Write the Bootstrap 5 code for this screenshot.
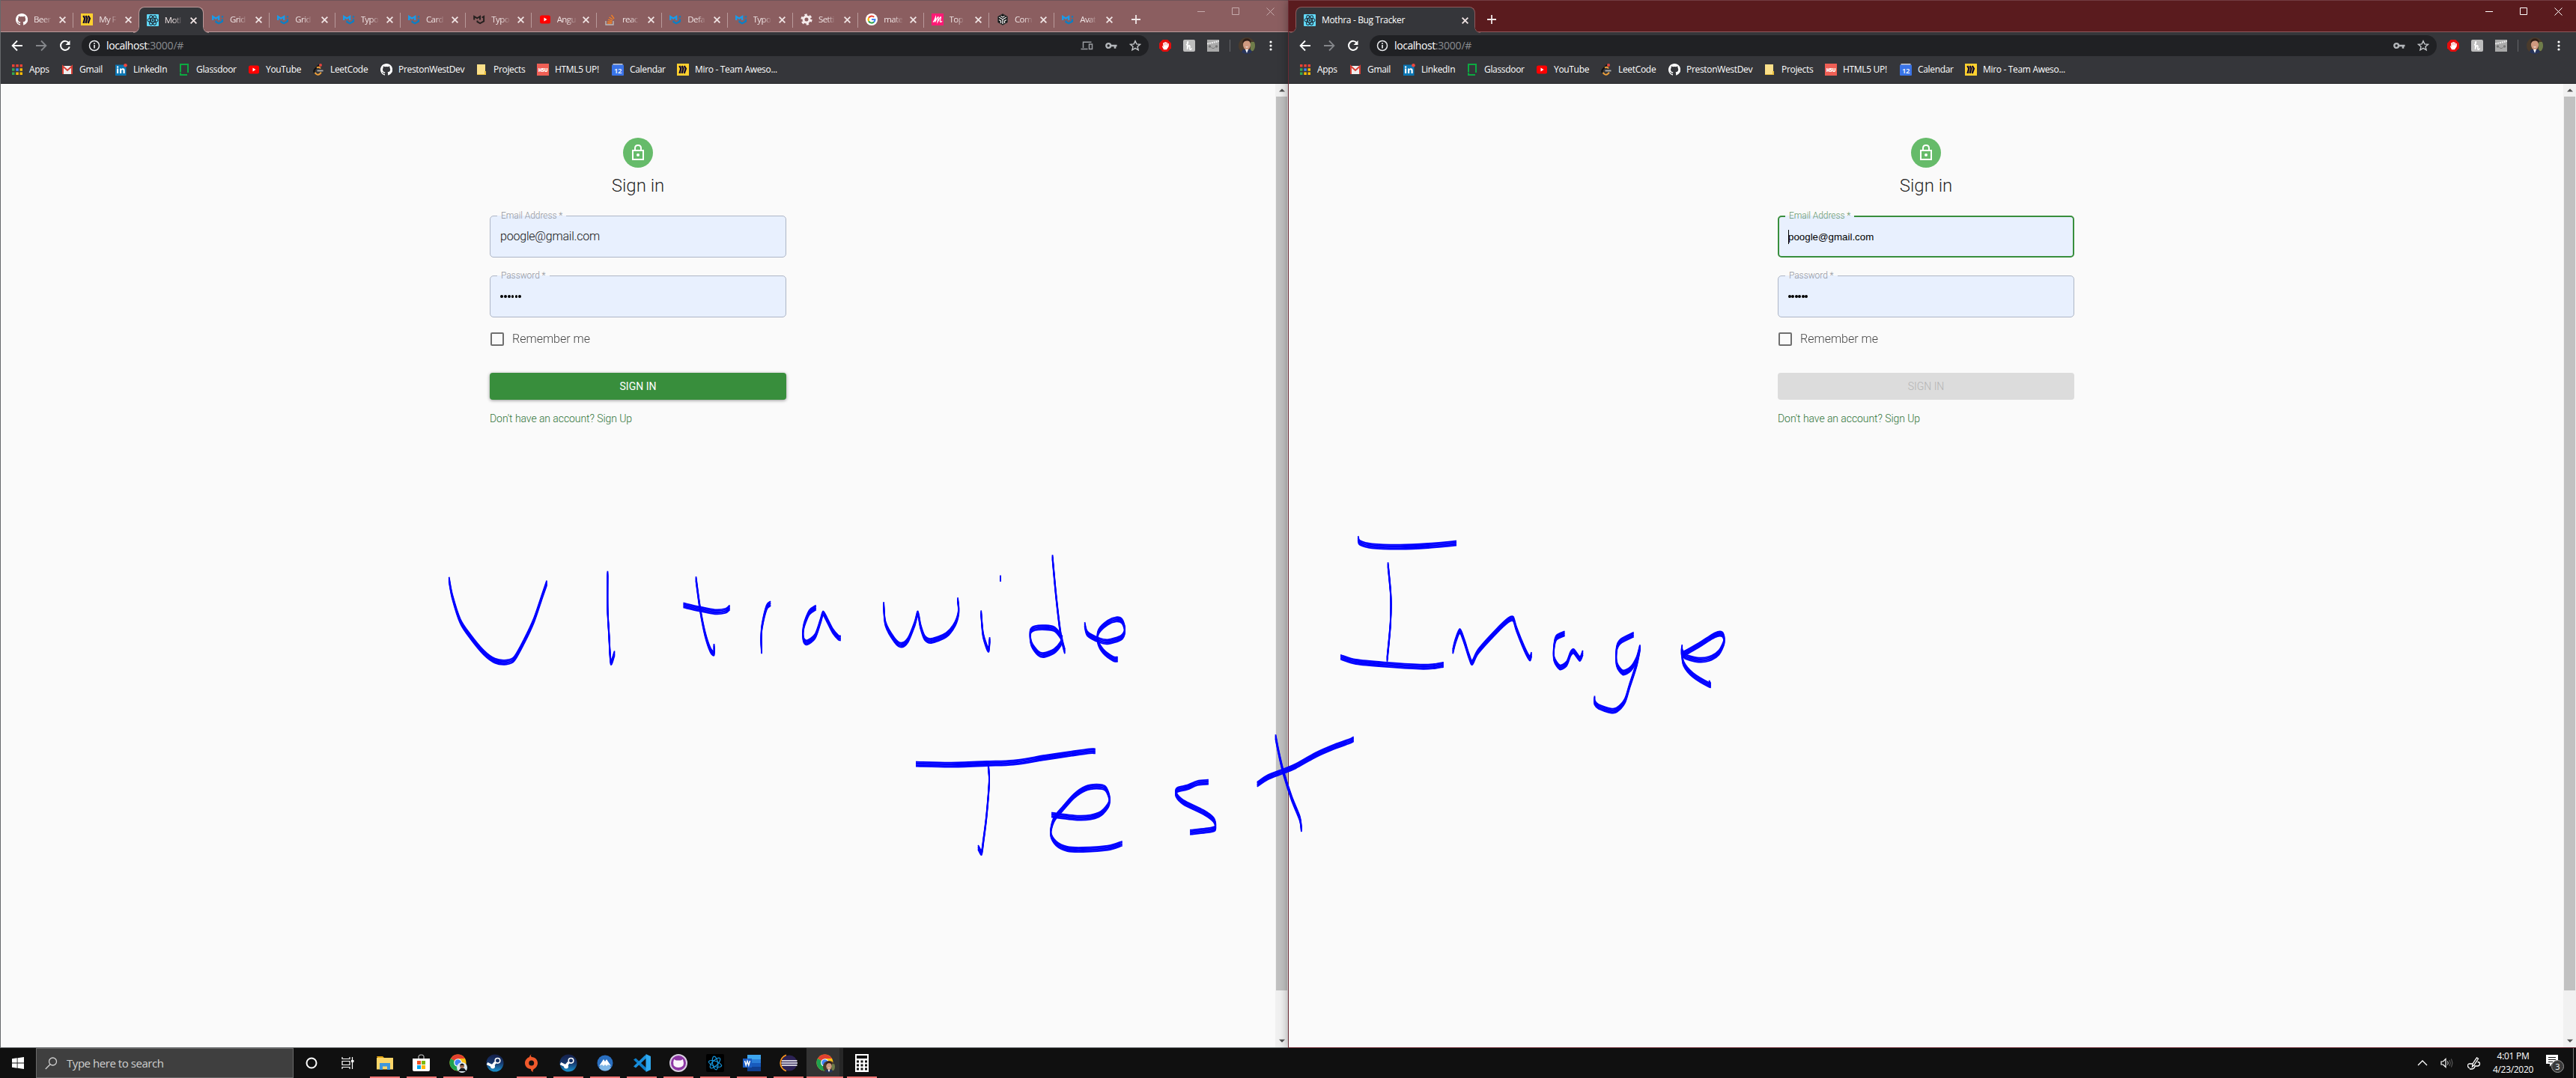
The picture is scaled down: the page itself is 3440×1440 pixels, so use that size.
<!DOCTYPE html>
<html lang="en">
<head>
<meta charset="utf-8">
<title>Mothra - Bug Tracker</title>
<link href="https://cdn.jsdelivr.net/npm/bootstrap@5.3.0/dist/css/bootstrap.min.css" rel="stylesheet">
<style>
body{width:3440px;height:1440px;overflow:hidden;font-family:"Open Sans","Noto Sans",sans-serif;font-size:12px;line-height:16px;background:#111}
svg{display:block;flex:none}
.win{width:1720px;height:1400px;border-left:1px solid #66696b;border-bottom:1px solid #66696b;background:#35363a}
.win-b{border-color:#6b2a35;position:relative;box-shadow:0 0 12px rgba(0,0,0,.35)}
.strip{height:43px;background:#8b5e60;border-top:1px solid #6f5458;border-bottom:1px solid #bb9a9a;padding-left:9px}
.win-b .strip{background:#5a1b1e;border-top-color:#723c42;border-bottom-color:#8e5a5c}
.tab{width:87.33px;height:34px;margin-top:8px;padding:0 8px 0 11px;color:#efe3e3;position:relative}
.tab+.tab:not(.on)::before{content:"";position:absolute;left:0;top:8px;height:20px;width:1px;background:#b99a9b}
.tab.on+.tab::before{display:none}
.tab span{margin-left:8px;white-space:nowrap;font-size:11.5px;letter-spacing:-.6px;-webkit-mask-image:linear-gradient(90deg,#000 55%,rgba(0,0,0,.15))}
.tab.on{background:#35363a;border:1px solid #bb9a9a;border-bottom:0;border-radius:8px 8px 0 0;height:35px;padding-left:10px;padding-right:7px}
.tab.on::before,.tab.on::after{content:"";position:absolute;bottom:0;width:8px;height:8px}
.tab.on::before{left:-8px;background:radial-gradient(circle at 0 0,transparent 7px,#bb9a9a 7.3px,#35363a 8.3px)}
.tab.on::after{right:-8px;background:radial-gradient(circle at 100% 0,transparent 7px,#bb9a9a 7.3px,#35363a 8.3px)}
.win-b .tab.on{width:240px;border-color:#8e5a5c}
.win-b .tab.on span{-webkit-mask-image:none;font-size:12px;letter-spacing:-.35px;color:#fff}
.win-b .tab.on::before{background:radial-gradient(circle at 0 0,transparent 7px,#8e5a5c 7.3px,#35363a 8.3px)}
.win-b .tab.on::after{background:radial-gradient(circle at 100% 0,transparent 7px,#8e5a5c 7.3px,#35363a 8.3px)}
.plus{margin:8px 0 0 15px;height:34px}
.ctls{margin-right:1px}
.ctl{width:46px;height:28px;color:#c6abac}
.win-b .ctl{color:#fff}
.tools{height:36px;padding:0 12px 0 13.5px}
.navi{width:32.3px}
.omni{height:28px;border-radius:14px;background:#202124;margin-left:3px;width:1424.5px;padding:0 10px 0 9px;color:#fff;font-size:14px}
.omni b{font-weight:400;margin-left:8px;letter-spacing:-.45px}
.omni i{font-style:normal;color:#8a8d91;letter-spacing:-.2px}
.ext{width:32.2px}
.marks{height:33px;border-bottom:1px solid #232427;padding-left:14px;color:#fff}
.mk{flex:none;height:28px;gap:8px;white-space:nowrap;letter-spacing:-.32px}
.page{background:#fafafa;color:rgba(0,0,0,.87);font-family:Roboto,sans-serif;font-weight:300;min-height:0}
.form{width:396px;padding-top:72px;margin:0 auto;font-size:16px}
.lock{width:40px;height:40px;background:#66bb6a;border-radius:50%}
.ttl{font-size:24px;line-height:32px;font-weight:300;margin:8px 0 24px}
.fld{height:56px;border:1px solid #aeb6c6;border-radius:5px;background:#e8f0fe;margin-bottom:24px;padding:0 13px;position:relative;line-height:56px;color:#111;letter-spacing:-.2px}
.fld label{position:absolute;left:9px;top:-9px;height:16px;padding:0 5px;line-height:16px;font-size:12px;letter-spacing:-.07px;color:#8f939b;background:linear-gradient(#fafafa 8px,#e8f0fe 8px)}
.fld.hot{border:2px solid #388e3c;padding:0 12px}
.fld.hot label{color:#5f9468;top:-10px;left:8px}
.sys{font-family:"Liberation Sans",Arial,sans-serif;font-size:13.33px;font-weight:400;color:#000;letter-spacing:0;padding-top:1px;margin-left:-1px}
.caret{width:1px;height:19px;background:#000}
.dots i{width:3.8px;height:3.8px;border-radius:50%;background:#000;display:block}
.chk{width:18px;height:18px;border:2px solid #6f6f6f;border-radius:2px;margin-left:1px}
.remember{height:18px;margin-top:-4px}
.remember span+span{margin-left:11px;opacity:.85}
.go{height:36px;border-radius:4px;background:#388e3c;color:#fff;font-size:14px;line-height:36px;text-align:center;box-shadow:0 1px 4px rgba(0,0,0,.4);font-weight:400;margin-top:36px}
.go.off{background:#dcdcdc;color:#b3b3b3;box-shadow:none;font-weight:300}
.lnk{font-size:14px;line-height:20px;letter-spacing:-.07px;color:#2f7338;margin-top:15px}
.sbar{width:17px;background:#f1f1f1}
.thumb{width:15px;height:1194px;background:#c1c1c1;margin:0 auto}
.ink{position:absolute;left:0;top:0;z-index:5;pointer-events:none}
.task{height:40px;background:#101010;color:#fff;position:relative;z-index:2}
.find{width:344px;height:40px;background:#3f3f3f;border:1px solid #6a6a6a;padding-left:11px;color:#d0d0d0;font-size:15px;letter-spacing:-.45px;gap:12px}
.tk{height:40px;width:49px;position:relative}
.tk-first{margin-left:-2px}
.run::after{content:"";position:absolute;left:4.5px;right:4.5px;bottom:0;height:2px;background:#fd7676}
.now{background:linear-gradient(90deg,#333 44px,#272727 44px)}
.now::after{left:0;right:0}
.clock{font-size:12px;line-height:18px;text-align:center;width:64px;letter-spacing:-.3px}
</style>
<script src="https://cdn.jsdelivr.net/npm/bootstrap@5.3.0/dist/js/bootstrap.bundle.min.js"></script>
</head>
<body>
<svg width="0" height="0" class="position-absolute">
<defs>
<symbol id="gh" viewBox="0 0 16 16"><path fill="#fff" d="M8 0C3.6 0 0 3.6 0 8c0 3.5 2.3 6.5 5.5 7.6.4.1.5-.2.5-.4v-1.4c-2.2.5-2.7-1-2.7-1-.4-.9-.9-1.2-.9-1.2-.7-.5.1-.5.1-.5.8.1 1.2.8 1.2.8.7 1.3 1.9.9 2.3.7.1-.5.3-.9.5-1.1C4.800 11.300 3 10.700 3 7.600c0-.9.3-1.600.8-2.100-.1-.2-.4-1 .1-2.100 0 0 .7-.2 2.200.8a7.500 7.500 0 0 1 4 0c1.500-1 2.200-.8 2.200-.8.4 1.100.2 1.900.1 2.100.5.600.8 1.300.8 2.100 0 3.100-1.900 3.700-3.700 3.900.3.300.600.800.600 1.500v2.200c0 .2.100.5.600.4A8 8 0 0 0 8 0z"/></symbol>
<symbol id="miro" viewBox="0 0 16 16"><path fill="#ffd02f" d="M0 0h16v16H0z"/><path d="M3.300 3l2 3.600L3.500 13M6.500 3l2 3.600L6.500 13M9.700 3l2.200 3.600L9.600 13" fill="none" stroke="#0c0730" stroke-width="2.300"/></symbol>
<symbol id="react" viewBox="0 0 16 16"><rect width="16" height="16" rx="1" fill="#61dafb"/><g fill="none" stroke="#20323d" stroke-width="1.100"><ellipse cx="8" cy="8" rx="7" ry="2.800"/><ellipse cx="8" cy="8" rx="7" ry="2.800" transform="rotate(60 8 8)"/><ellipse cx="8" cy="8" rx="7" ry="2.800" transform="rotate(120 8 8)"/></g><circle cx="8" cy="8" r="1.400" fill="#20323d"/></symbol>
<symbol id="mui" viewBox="0 0 16 16"><g fill="none" stroke-width="2.300"><path d="M1.200 9V4l4 2.600L9.200 4v5" stroke="#1a9bea"/><path d="M5.500 9.500v1.800l3.600 2 4.800-2.700V7.500" stroke="#0b7fc4"/><path d="M14 3.300v2.200" stroke="#0b7fc4"/></g></symbol>
<symbol id="muik" viewBox="0 0 16 16"><g fill="none" stroke="#26201f" stroke-width="2"><path d="M1.200 8.500V4l4 2.400L9 4v4.500"/><path d="M5.500 9.500v1.600l3.600 2 5-2.700V4l-2.500 1.500"/></g></symbol>
<symbol id="yt" viewBox="0 0 16 16"><rect x="1" y="2.500" width="14" height="11" rx="2.500" fill="#f00"/><path d="M6.500 5.500v5L10.500 8z" fill="#fff"/></symbol>
<symbol id="so" viewBox="0 0 16 16"><path d="M2 10v5h10v-5" fill="none" stroke="#bcbbbb" stroke-width="1.400"/><path d="M4 13h6M4.200 10.700l6 .7M5 8l5.600 1.800M6.500 5l5 3.300M9.500 2l3.600 5" stroke="#f48024" stroke-width="1.300"/></symbol>
<symbol id="gear" viewBox="0 0 16 16"><g fill="none" stroke="#f5ecec"><circle cx="8" cy="8" r="4" stroke-width="3"/><circle cx="8" cy="8" r="6.300" stroke-width="2.600" stroke-dasharray="3.300 3.300"/></g></symbol>
<symbol id="goog" viewBox="0 0 16 16"><circle cx="8" cy="8" r="8" fill="#fff"/><g fill="none" stroke-width="2.200"><path d="M11.200 4.800A4.500 4.500 0 0 0 4.100 5.800" stroke="#ea4335"/><path d="M4.100 5.800a4.500 4.500 0 0 0 0 4.400" stroke="#fbbc05"/><path d="M4.100 10.200a4.500 4.500 0 0 0 7 1.200" stroke="#34a853"/><path d="M11.100 11.400A4.500 4.500 0 0 0 12.400 8H8" stroke="#4285f4"/></g></symbol>
<symbol id="emm" viewBox="0 0 16 16"><path fill="#ff1a75" d="M0 0h16v16H0z"/><path d="M2 11.500C4 10 5 6 5.500 4.500 6 6.500 5 9 4.500 11.500 6 9 7.500 5 9 4.500 9.500 6 8 9 8 11.500 9.500 9 11 5 12.300 4.500c.700 1.500-1.500 4.500-.8 6.500.8.800 2-.2 2.500-1" fill="none" stroke="#fff" stroke-width="1.200"/></symbol>
<symbol id="csb" viewBox="0 0 16 16"><path fill="#151515" stroke="#444" stroke-width=".8" d="M8 .5l6.500 3.700v7.600L8 15.500l-6.500-3.700V4.200z"/><path d="M3 5l5 3 5-3M8 8v6M5.500 3.500L8 5l2.500-1.500M3 8.500l2.500 1.500v3M13 8.500L10.500 10v3" fill="none" stroke="#e8e8e8" stroke-width="1.400"/></symbol>
<symbol id="x" viewBox="0 0 10 10"><path d="M1.500 1.500l7 7M8.500 1.500l-7 7" stroke="currentColor" stroke-width="1.700"/></symbol>
<symbol id="plus" viewBox="0 0 14 14"><path d="M7 1v12M1 7h12" stroke="#efe6e6" stroke-width="1.800"/></symbol>
<symbol id="back" viewBox="0 0 16 16"><path d="M15 8H2M8 1.500L1.600 8 8 14.500" fill="none" stroke="currentColor" stroke-width="1.800"/></symbol>
<symbol id="rel" viewBox="0 0 16 16"><path d="M13 4.500A6 6 0 1 0 13.800 9.500" fill="none" stroke="#fff" stroke-width="2"/><path d="M14.500 1v6h-6z" fill="#fff"/></symbol>
<symbol id="info" viewBox="0 0 16 16"><circle cx="8" cy="8" r="6.500" fill="none" stroke="#e8eaed" stroke-width="1.500"/><path d="M8 7v4.500M8 4.200v1.700" stroke="#e8eaed" stroke-width="1.700"/></symbol>
<symbol id="cast" viewBox="0 0 16 14"><g fill="none" stroke="#9a9da1" stroke-width="1.500"><path d="M14 2.200H3V10M0 11.500h9"/><path d="M11 5h4v6.500h-4z"/></g></symbol>
<symbol id="key" viewBox="0 0 16 10"><circle cx="4.200" cy="5" r="2.900" fill="none" stroke="#b4b7bb" stroke-width="2.400"/><path d="M7 5h8.500M13 5v3.800" stroke="#b4b7bb" stroke-width="2.600"/></symbol>
<symbol id="star" viewBox="0 0 16 16"><path d="M8 1.700l1.900 4.200 4.600.4-3.500 3 1.100 4.500L8 11.400l-4.100 2.400L5 9.300l-3.500-3 4.600-.4z" fill="none" stroke="#c4c7ca" stroke-width="1.400"/></symbol>
<symbol id="abp" viewBox="0 0 16 16"><path fill="#e40d0d" d="M4.700 0h6.600L16 4.700v6.600L11.300 16H4.700L0 11.300V4.700z"/><path d="M4.500 8.500l2 4h3L12 8.500V5M6 8V4M8 8V3M10 8V3.500" stroke="#fff" stroke-width="1.600" fill="none"/><path d="M5.500 7.500h5.800v3L9.500 13h-3z" fill="#fff"/></symbol>
<symbol id="honey" viewBox="0 0 16 16"><rect width="16" height="16" rx="2" fill="#bdbdbd"/><path d="M4 7c2-.5 3-4 2.200-4.300C5 2.700 6 7 5.500 13 6 9 7.500 7.500 8.600 8c1.200.5-.6 4 .4 5 1 .5 2-.5 2.500-1.500" fill="none" stroke="#fff" stroke-width="1.600"/></symbol>
<symbol id="smile" viewBox="0 0 16 16"><path fill="#aaa" d="M0 0h16v16H0z"/><path d="M0 5.500L16 2" stroke="#eee" stroke-width="2" stroke-dasharray="2 1"/><g fill="#777"><circle cx="3.500" cy="9" r="1.700"/><circle cx="12.500" cy="9" r="1.700"/></g><path d="M5.500 10.500q2.500 2.500 5 0" fill="none" stroke="#777"/></symbol>
<symbol id="face" viewBox="0 0 22 22"><clipPath id="fc"><circle cx="11" cy="11" r="11"/></clipPath><g clip-path="url(#fc)"><path fill="#4a3b2c" d="M0 0h22v22H0z"/><path fill="#6f7d4a" d="M16 6h6v12h-6z"/><path fill="#27345a" d="M2 22l4-6h10l4 6z"/><ellipse cx="11" cy="10" rx="5" ry="6.500" fill="#cf9a80"/><path fill="#2f1e17" d="M5.500 8C5 3 8 1.500 11 1.500S17 3 16.500 8C15 4.500 13 4.500 11 4.500S7 5 5.500 8z"/><path fill="#fff" d="M9 16l2 5 2-5zM9 12.500q2 2 4 0z"/></g></symbol>
<symbol id="apps" viewBox="0 0 16 16"><path fill="#ea4335" d="M1 1h3.500v3.500H1zM6.300 1h3.500v3.500H6.300zM11.500 1H15v3.500h-3.500z"/><path fill="#34a853" d="M1 6.300h3.500v3.500H1zM1 11.500h3.500V15H1z"/><path fill="#4285f4" d="M6.300 6.300h3.500v3.500H6.300z"/><path fill="#fbbc05" d="M11.500 6.300H15v3.500h-3.500zM6.300 11.500h3.500V15H6.300zM11.500 11.500H15V15h-3.500z"/></symbol>
<symbol id="gmail" viewBox="0 0 16 16"><path fill="#eee" d="M1 3h14v11H1z"/><path d="M2 14V3.500l6 5.500 6-5.500V14" fill="none" stroke="#d93f35" stroke-width="2"/></symbol>
<symbol id="li" viewBox="0 0 16 16"><path fill="#0a77b5" d="M0 1.500h14.500V16H0z"/><path fill="#fff" d="M2 6.500h2.200V13H2zM2 3.500h2.200v2H2zM6 6.500h2v1c1-1.700 4.700-1.700 4.700 1.500v4h-2.200V9.500c0-1.600-2.300-1.500-2.300 0V13H6z"/><circle cx="13.500" cy="2.300" r="2.300" fill="#f0473e"/></symbol>
<symbol id="gd" viewBox="0 0 16 16"><path fill="none" stroke="#0caa41" stroke-width="2" d="M3 11.500V1h10v11M3 12.500V15h9"/></symbol>
<symbol id="lc" viewBox="0 0 16 16"><path d="M9.500 1.500L3 8q-1.500 2 0 4" fill="none" stroke="#111" stroke-width="2"/><path d="M3.500 12l2 2q2.500 1.500 4.500-.3l2-2M6 5.500q3-2 5 1" fill="none" stroke="#f0a13a" stroke-width="2"/><path d="M6.500 9.500h8" stroke="#b3b3b3" stroke-width="1.800"/><circle cx="11" cy="2" r="2" fill="#e0443e"/></symbol>
<symbol id="fold" viewBox="0 0 16 16"><path fill="#fbe08a" d="M2 1h11v14H2z"/><path fill="#e9bf3f" d="M2 14h10v-4h2v5H2z"/></symbol>
<symbol id="h5" viewBox="0 0 16 16"><path fill="#ef5f55" d="M0 0h16v16H0z"/><text x="8" y="10.500" font-family="Open Sans" font-weight="800" font-size="6.500" fill="#fff" text-anchor="middle">H5U</text></symbol>
<symbol id="cal" viewBox="0 0 16 16"><path fill="#ccc" d="M1.500 0h13v3h-13z"/><rect y="1.500" width="16" height="14.500" rx="1" fill="#3a74e8"/><text x="8" y="13" font-family="Open Sans" font-size="9.500" font-weight="600" fill="#fff" text-anchor="middle">12</text></symbol>
<symbol id="chrome" viewBox="0 0 24 24"><circle cx="12" cy="12" r="11.500" fill="#fbc116"/><path fill="#e2402f" d="M12 12L2 6.300A11.500 11.500 0 0 1 22 6.300H12z"/><path fill="#1fa250" d="M12 12L2 6.300A11.500 11.500 0 0 0 12 23.500l4.500-8z"/><circle cx="12" cy="12" r="5.600" fill="#fff"/><circle cx="12" cy="12" r="4.400" fill="#4285f4"/></symbol>
<linearGradient id="sg" x2="0" y2="1"><stop stop-color="#15204a"/><stop offset=".5" stop-color="#17386d"/><stop offset="1" stop-color="#1993cf"/></linearGradient>
<symbol id="steam" viewBox="0 0 24 24"><circle cx="12" cy="12" r="11.500" fill="url(#sg)"/><circle cx="15.500" cy="8.800" r="3.300" fill="none" stroke="#fff" stroke-width="1.600"/><path d="M1.500 12.500l7 3.500 4-5" stroke="#fff" stroke-width="3.600" fill="none"/><circle cx="9" cy="16.500" r="3" fill="#fff"/></symbol>
<symbol id="tri" viewBox="0 0 10 6"><path d="M0 .5h10L5 5.500z" fill="#505050"/></symbol>
</defs></svg>

<main class="d-flex" id="desk"></main>

<footer class="task d-flex align-items-center">
  <div class="tk d-flex align-items-center justify-content-center" style="width:48px"><svg width="16" height="16"><path fill="#fff" d="M0 2.300L6.700 1.300v6.200H0zM7.500 1.200L16 0v7.500H7.500zM0 8.400h6.700v6.300L0 13.700zM7.500 8.400H16V16l-8.500-1.200z"/></svg></div>
  <div class="find d-flex align-items-center"><svg width="17" height="17"><circle cx="10.500" cy="6" r="5" fill="none" stroke="#d0d0d0" stroke-width="1.300"/><path d="M7 9.700L.8 16" stroke="#d0d0d0" stroke-width="1.300"/></svg>Type here to search</div>
  <div class="tk d-flex align-items-center justify-content-center" style="width:48px"><svg width="16" height="16"><circle cx="8" cy="8" r="6.500" fill="none" stroke="#fff" stroke-width="2"/></svg></div>
  <div class="tk d-flex align-items-center justify-content-center"><svg width="17" height="16" fill="none" stroke="#fff" stroke-width="1.200"><path d="M1 0v2.500h10V0M1 5.500h10v5H1zM1 16v-2.500h10V16M14.500 0v16"/><path d="M13 5.500h3.500" stroke-width="3"/></svg></div>
  <div class="tk ms-0 run d-flex align-items-center justify-content-center" style="margin-left:1.500px"><svg width="22" height="20"><path fill="#e5a50f" d="M0 1h8l2 2h-9z"/><path fill="#fbd669" d="M0 3h22v15.500H0z"/><path fill="#3f97dc" d="M4 19v-9h14v9h-4v-4.500H8V19z"/></svg></div>
  <div class="tk run d-flex align-items-center justify-content-center"><svg width="23" height="24"><path d="M8 6V3q0-2 3.500-2T15 3v3" fill="none" stroke="#ddd"/><path fill="#fff" d="M0 6h23v15q0 2-2 2H2q-2 0-2-2z"/><path fill="#f25022" d="M6 9h5v5H6z"/><path fill="#7fba00" d="M12 9h5v5h-5z"/><path fill="#00a4ef" d="M6 15h5v5H6z"/><path fill="#ffb900" d="M12 15h5v5h-5z"/></svg></div>
  <div class="tk run d-flex align-items-center justify-content-center"><svg width="26" height="26"><use href="#chrome" width="23" height="23" x="1" y="1"/><circle cx="18" cy="19" r="7" fill="#dfeaf0"/><circle cx="18" cy="17" r="3" fill="#9b6b52"/><path fill="#16191f" d="M13 24l3-4h5l3 4zM15 16q3-5 6 0z"/></svg></div>
  <div class="tk d-flex align-items-center justify-content-center"><svg width="24" height="24"><use href="#steam"/></svg></div>
  <div class="tk run d-flex align-items-center justify-content-center"><svg width="20" height="24"><path d="M10 0C8 2 9 3 10 4c5 0 8 4 8 8s-3 7-5 8c-1 1-2 2-1 4-3-1-3-3-3-4-5 0-8-4-8-8s3-7 6-8c0-1 1-3 3-4z" fill="#f0592b"/><circle cx="9.700" cy="12" r="3.500" fill="#111"/></svg></div>
  <div class="tk run d-flex align-items-center justify-content-center"><svg width="24" height="24"><use href="#steam"/></svg></div>
  <div class="tk run d-flex align-items-center justify-content-center"><svg width="22" height="22"><circle cx="11" cy="11" r="10.500" fill="#2a6fc0"/><path d="M3 17L8.500 8l2 3 2-3L19 17q-3 4.500-8 4.500T3 17z" fill="#7fb6e6"/><path d="M3 15l6-9 2 3 2-3 6 9-4-2-2 2-2-2-2 2-2-2z" fill="#fff"/></svg></div>
  <div class="tk run d-flex align-items-center justify-content-center"><svg width="24" height="24"><path d="M1 7.500l3-2L18.500 19v4L16 22z" fill="#0d7fcb"/><path d="M1 16.500l3 2L18.500 5V1L16 2z" fill="#1a8fdc"/><path d="M17.500 0L24 3v18l-6.500 3z" fill="#2ea9f0"/></svg></div>
  <div class="tk run d-flex align-items-center justify-content-center"><svg width="24" height="24"><circle cx="12" cy="12" r="11" fill="#8d36a4" stroke="#d8cfe0" stroke-width="2"/><path fill="#fbf4fb" d="M6 7l3 1.500h6L18 7q1.500 5 .5 8-2 3-6.500 3t-6.500-3Q4.500 11 6 7z"/></svg></div>
  <div class="tk run d-flex align-items-center justify-content-center"><svg width="24" height="24"><rect width="24" height="24" rx="2" fill="#000"/><g fill="none" stroke="#1596dd" stroke-width="1.200"><ellipse cx="12" cy="13" rx="9" ry="3.500" transform="rotate(20 12 13)"/><ellipse cx="12" cy="12" rx="9" ry="3.500" transform="rotate(80 12 12)"/><ellipse cx="12" cy="12" rx="9" ry="3.500" transform="rotate(135 12 12)"/></g></svg></div>
  <div class="tk run d-flex align-items-center justify-content-center"><svg width="24" height="22"><path fill="#3da5ee" d="M6 0h18v6H6z"/><path fill="#2a7dd8" d="M6 6h18v5H6z"/><path fill="#185abd" d="M6 11h18v5H6z"/><path fill="#103f91" d="M6 16h18v6H6z"/><path fill="#1b5ec4" d="M0 5h12v12H0z"/><path d="M2.500 8l1.700 6L6 8.500 7.800 14l1.700-6" fill="none" stroke="#fff" stroke-width="1.500"/></svg></div>
  <div class="tk run d-flex align-items-center justify-content-center"><svg width="24" height="24"><path d="M9 1.500A11 11 0 0 0 9 22.500" fill="none" stroke="#f7941e" stroke-width="2"/><circle cx="13" cy="12" r="10.500" fill="#2c2255"/><path d="M3 9h20.500M2.500 12h21.500M3 15h20.500" stroke="#fff" stroke-width="1.600"/></svg></div>
  <div class="tk run now d-flex align-items-center justify-content-center"><svg width="26" height="26"><use href="#chrome" width="23" height="23" x="1" y="1"/><use href="#face" x="10" y="10" width="16" height="16"/></svg></div>
  <div class="tk run d-flex align-items-center justify-content-center"><svg width="18" height="24"><path fill="#fff" d="M0 0h18v24H0z"/><path fill="#111" d="M2 2h14v4H2z"/><path stroke="#111" stroke-width="3" stroke-dasharray="3 2.500" d="M2 10h14M2 15h14M2 20h14"/></svg></div>
  <div class="ms-auto d-flex align-items-center">
    <svg width="14" height="8"><path d="M1 7l6-6 6 6" fill="none" stroke="#fff" stroke-width="1.300"/></svg>
    <svg width="17" height="14" style="margin-left:17px"><path d="M1 5h2.500L7 1.500v11L3.500 9H1z" fill="none" stroke="#fff" stroke-width="1.200"/><path d="M9.500 4.500q1.500 2.500 0 5" fill="none" stroke="#ddd"/><path d="M12 3q2.500 4 0 8M14.500 1.500q3 5.500 0 11" fill="none" stroke="#666"/></svg>
    <svg width="18" height="17" style="margin-left:19px" fill="none" stroke="#fff" stroke-width="1.300"><path d="M6.500 13L7 9l5.500-8 2 1.300L9 10.500zM6.500 9H3q-2.500 0-2.500 2.500t2.500 3.500M3 16h3q4-1 4-4h4q2.500-.5 2.500-3t-3-2.500"/></svg>
    <div class="clock" style="margin-left:11px">4:01 PM<br>4/23/2020</div>
    <svg width="26" height="26" style="margin-left:11px"><path fill="#fff" d="M1 2h16v12h-8l-3 4v-4H1z"/><path d="M4 5.500h10M4 8.500h10M4 11.500h6" stroke="#111"/><circle cx="16.500" cy="17.500" r="8" fill="#3a3a3a" stroke="#999"/><text x="16.500" y="21.500" fill="#fff" font-size="11" text-anchor="middle">3</text></svg>
    <div style="width:1px;height:40px;background:#7a7a7a;margin:0 3px 0 11px"></div>
  </div>
</footer>

<svg class="ink" width="3440" height="1440"><defs><g id="pen" fill="none" stroke="#00f" stroke-width="1.800" stroke-linecap="square" stroke-linejoin="round"></g></defs>
<use href="#pen" y="-3"/><use href="#pen" y="-1.500"/><use href="#pen"/><use href="#pen" y="1.500"/><use href="#pen" y="3"/></svg>

<script>
const ic=(n,w=16,h=w)=>`<svg width="${w}" height="${h}"><use href="#${n}"/></svg>`;
const tab=(n,t,on)=>`<div class="tab d-flex align-items-center ${on?'on':''}">${ic(n)}<span>${t}</span><div class="ms-auto">${ic('x',11)}</div></div>`;
const marks=[['apps','Apps',67],['gmail','Gmail',72],['li','LinkedIn',84],['gd','Glassdoor',93],['yt','YouTube',86],['lc','LeetCode',91],['gh','PrestonWestDev',127],['fold','Projects',82],['h5','HTML5 UP!',100],['cal','Calendar',87],['miro','Miro - Team Aweso...',150]];
const cell=(c,s)=>`<div class="${c} d-flex justify-content-center align-items-center">${s}</div>`;
function win(tabs,second){
  return `<section class="win d-flex flex-column ${second?'win-b':''}">
  <div class="strip d-flex">${tabs}<div class="plus d-flex align-items-center">${ic('plus',14)}</div>
    <div class="ctls ms-auto d-flex">
      ${cell('ctl','<svg width="10" height="10"><path d="M0 5.500h10" stroke="currentColor"/></svg>')}
      ${cell('ctl','<svg width="10" height="10"><path d="M.5.5h9v9h-9z" fill="none" stroke="currentColor"/></svg>')}
      ${cell('ctl','<svg width="11" height="11"><path d="M.5.5l10 10M10.500.5l-10 10" stroke="currentColor"/></svg>')}</div></div>
  <div class="tools d-flex align-items-center">
    <div class="navi text-white">${ic('back')}</div><div class="navi" style="color:#85878b"><div style="transform:scaleX(-1);width:16px">${ic('back')}</div></div><div class="navi" style="width:27px">${ic('rel')}</div>
    <div class="omni d-flex align-items-center">${ic('info')}<b>localhost</b><i>:3000/#</i>
      <div class="ms-auto d-flex align-items-center" style="gap:16px">${second?'':ic('cast',17,14)}${ic('key',16,10)}${ic('star')}</div></div>
    <div class="d-flex align-items-center" style="margin-left:6px">${cell('ext',ic('abp'))}${cell('ext',ic('honey'))}${cell('ext',ic('smile'))}
      <div style="width:1px;height:16px;background:#65676b;margin:0 11px 0 6px"></div>${ic('face',22)}
      <svg width="4" height="14" fill="#fff" style="margin-left:19px"><circle cx="2" cy="2" r="1.600"/><circle cx="2" cy="7" r="1.600"/><circle cx="2" cy="12" r="1.600"/></svg></div>
  </div>
  <div class="marks d-flex">${marks.map(m=>`<div class="mk d-flex align-items-center" style="width:${m[2]}px">${ic(m[0])}${m[1]}</div>`).join('')}</div>
  <div class="page d-flex flex-grow-1"><div class="flex-grow-1"><div class="form">
      <div class="lock mx-auto d-flex justify-content-center align-items-center"><svg width="24" height="24" viewBox="0 0 24 24"><path fill="none" stroke="#fff" stroke-width="2" d="M5 9h14v12H5zM8 9V6q0-4 4-4t4 4v3"/><circle cx="12" cy="15" r="2" fill="#fff"/></svg></div>
      <h1 class="ttl text-center">Sign in</h1>
      <div class="fld d-flex align-items-center ${second?'hot':''}"><label>Email Address&nbsp;*</label>${second?'<span class="caret"></span><span class="sys">poogle@gmail.com</span>':'<span>poogle@gmail.com</span>'}</div>
      <div class="fld d-flex align-items-center dots" style="gap:${second?.7:1.1}px"><label>Password&nbsp;*</label>${'<i></i>'.repeat(6)}</div>
      <div class="remember d-flex align-items-center"><span class="chk"></span><span>Remember me</span></div>
      <div class="go ${second?'off':''}">SIGN IN</div>
      <div class="lnk">Don't have an account? Sign Up</div>
    </div></div>
    <div class="sbar d-flex flex-column align-items-center"><div class="d-flex align-items-center" style="height:17px">${ic('tri',8,5).replace('<svg','<svg style="transform:scaleY(-1)"')}</div><div class="thumb"></div><div class="mt-auto d-flex align-items-center" style="height:17px">${ic('tri',8,5)}</div></div>
  </div></section>`;
}
const left=[['gh','Beer'],['miro','My F'],['react','Motl',1],['mui','Grid'],['mui','Grid'],['mui','Typo'],['mui','Card'],['muik','Typo'],['yt','Angu'],['so','reac'],['mui','Defa'],['mui','Typo'],['gear','Setti'],['goog','mate'],['emm','Top'],['csb','Com'],['mui','Avat']];
document.getElementById('desk').innerHTML=win(left.map(t=>tab(...t)).join(''),false)+win(tab('react','Mothra - Bug Tracker',1),true);

const areas=[[580,690,1.668,3,[
'33,254 40,320 58,420 80,480 110,545 135,578 160,584 178,570 200,500 222,415 240,320 250,268',
'386,230 386,370 389,470 393,583 401,550',
'583,252 592,370 603,470 615,535 623,548 623,522','556,356 590,370 625,382 648,378 657,366',
'748,350 740,365 730,440 728,490 729,538',
'849,366 835,385 823,440 822,490 830,505 848,480 860,420 866,388 875,415 888,460 900,485 904,487',
'1001,354 1005,430 1025,495 1040,515 1055,495 1070,430 1077,388 1083,440 1092,485 1107,498 1140,475 1160,430 1168,380 1166,336',
'1218,388 1222,470 1230,520 1235,533 1237,495','1261,247 1261,249',
'1377,165 1385,320 1395,470 1404,538','1398,487 1380,450 1345,445 1328,460 1330,510 1345,548 1358,555 1380,540 1395,510 1398,487',
'1449,435 1455,470 1480,495 1500,502 1530,485 1538,455 1532,420 1519,412 1500,425 1480,460 1478,500 1490,540 1512,570 1521,572',
'1074,992 1150,995 1230,990 1290,986 1360,966 1420,950 1460,940 1471,940','1234,1000 1236,1060 1230,1200 1223,1300 1219,1347 1212,1328',
'1376,1196 1440,1208 1480,1195 1500,1160 1504,1130 1495,1090 1475,1082 1450,1090 1425,1120 1400,1170 1380,1215 1373,1270 1385,1310 1410,1332 1445,1335 1500,1328 1531,1311']],
[1500,690,1.8667,3,[
'586,90 590,105 620,118 690,122 760,117 829,107','660,195 667,320 666,430 658,570','543,564 580,582 650,593 740,602 775,600 797,594',
'822,538 828,500 839,459 850,500 862,560 870,585 885,540 930,460 960,415 972,410 980,450 1000,530 1013,568 1017,555',
'1099,470 1080,485 1074,520 1074,570 1088,604 1105,590 1115,550 1123,540 1138,570 1145,548',
'1271,474 1240,500 1230,530 1230,590 1245,625 1265,610 1280,570 1288,525 1280,590 1262,680 1250,740 1230,775 1215,778 1185,762 1175,745 1175,730',
'1393,525 1395,550 1435,515 1475,475 1493,472 1498,500 1485,545 1460,570 1430,574 1400,560 1393,540 1397,590 1420,635 1461,675 1461,668',
'211,1064 185,1068 160,1085 135,1095 132,1115 150,1145 200,1185 225,1215 230,1245 220,1255 168,1265',
'380,885 388,950 400,1030 420,1130 440,1210 444,1252','335,1072 360,1045 400,1020 430,1000 480,955 530,920 565,900 573,893']]];
let out='';
for(const [ox,oy,sx,sy,list] of areas)for(const s of list){
  const p=s.split(' ').map(q=>{const [a,b]=q.split(',');return [ox+a/sx,oy+b/sy]});
  let d=`M${p[0]}`;
  for(let i=0;i<p.length-1;i++){const a=p[i-1]||p[i],b=p[i],c=p[i+1],e=p[i+2]||c,k=7;
    d+=`C${b[0]+(c[0]-a[0])/k},${b[1]+(c[1]-a[1])/k} ${c[0]-(e[0]-b[0])/k},${c[1]-(e[1]-b[1])/k} ${c[0]},${c[1]}`}
  out+=`<path d="${d}"/>`;
}
document.getElementById('pen').innerHTML=out;
</script>
</body>
</html>
